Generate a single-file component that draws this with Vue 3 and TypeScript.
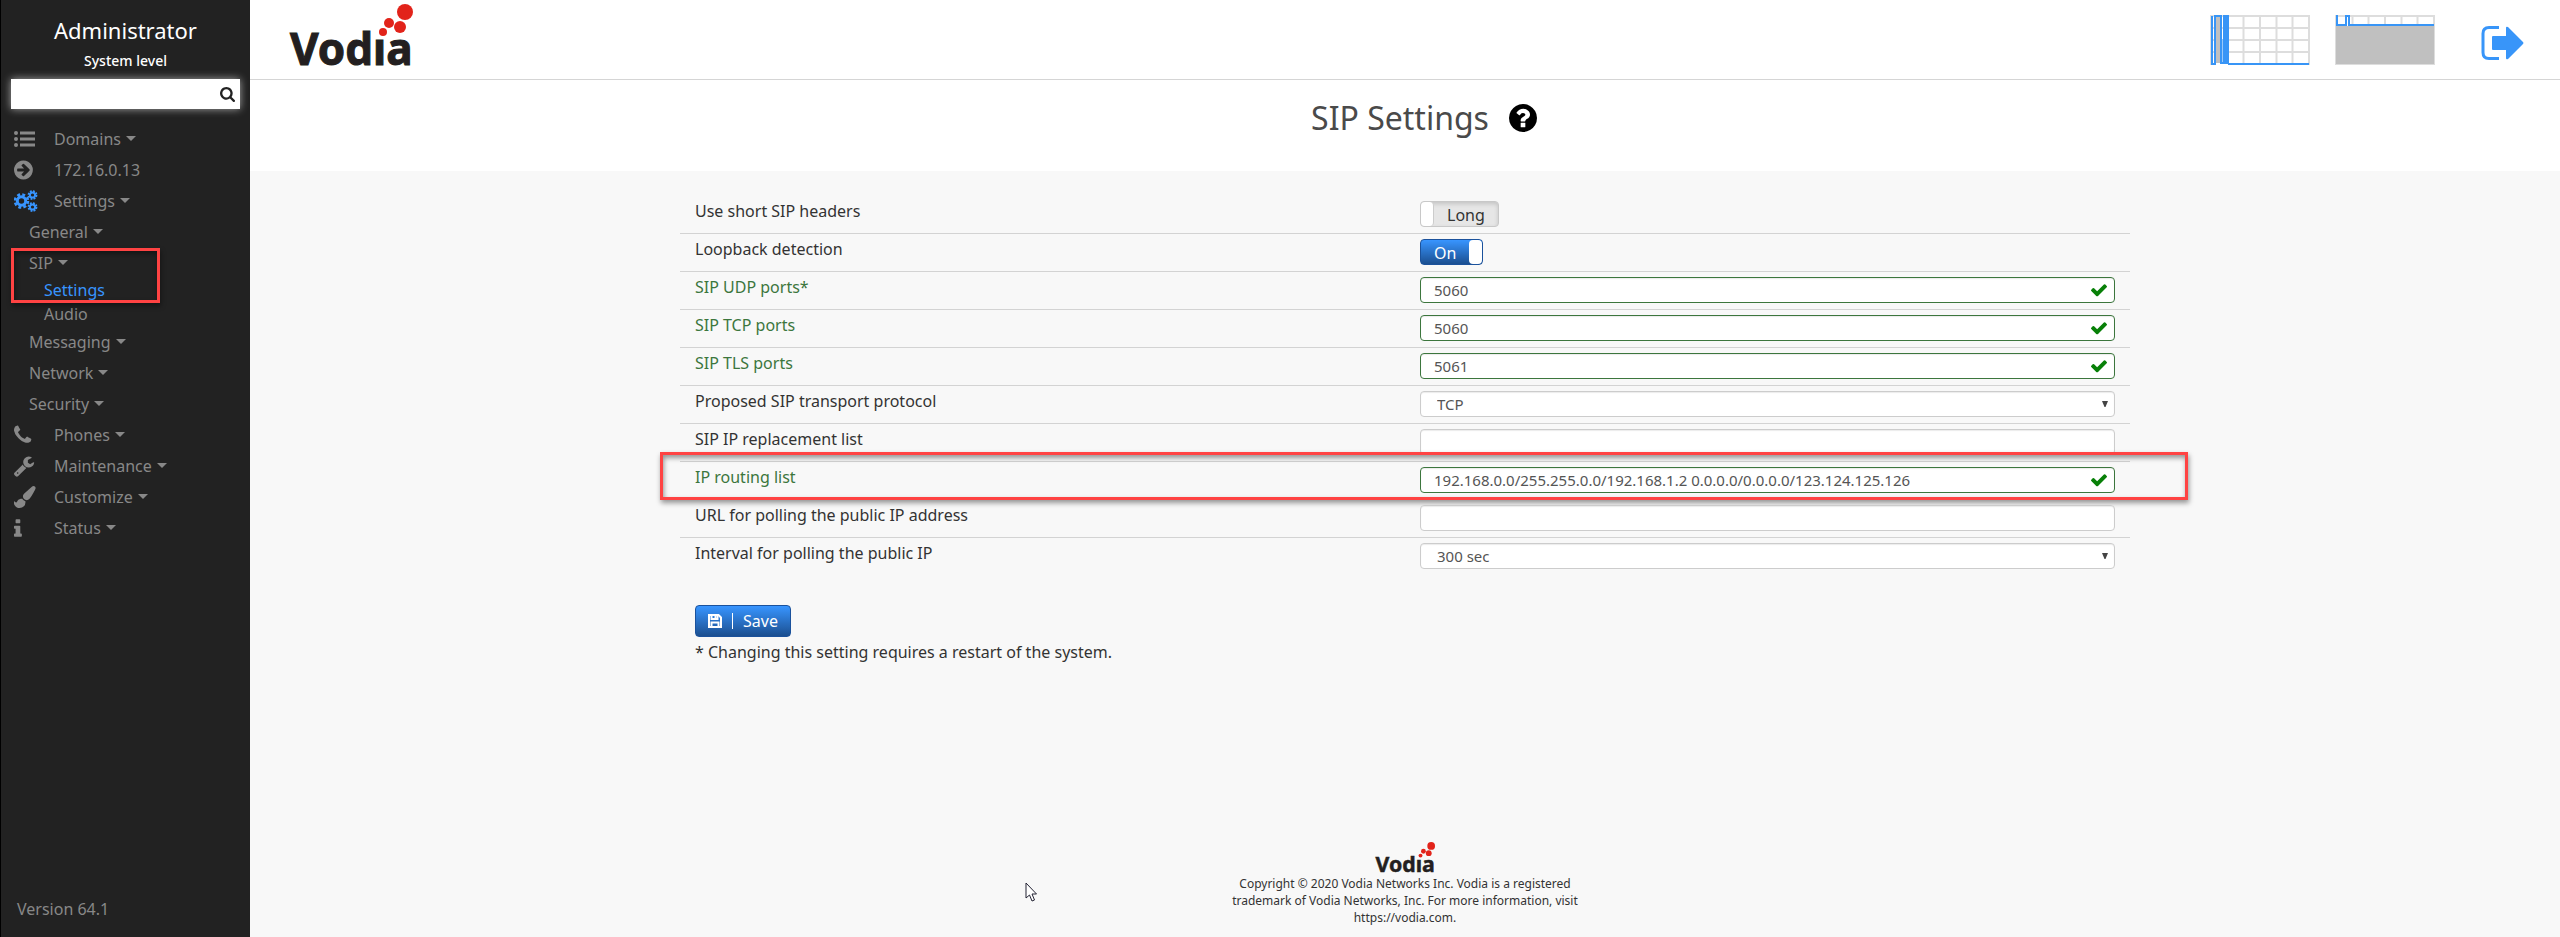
<script setup lang="ts">
import { reactive, ref } from 'vue'

interface NavItem {
  label: string
  level: 1 | 2 | 3
  icon?: string
  caret?: boolean
  active?: boolean
}

interface Field {
  id: string
  label: string
  kind: 'toggle' | 'text' | 'select'
  value: string
  on?: boolean
  valid?: boolean
  marked?: boolean
  options?: string[]
}

const iconPaths: Record<string, string> = {
  arrow:
    'M1413 896q0-27-18-45l-91-91-362-362q-18-18-45-18t-45 18l-91 91q-18 18-18 45t18 45l189 189h-502q-26 0-45 19t-19 45v128q0 26 19 45t45 19h502l-189 189q-18 18-18 45t18 45l91 91q18 18 45 18t45-18l362-362 91-91q18-18 18-45zm251 0q0 209-103 385.5t-279.5 279.5-385.5 103-385.5-103-279.5-279.5-103-385.5 103-385.5 279.5-279.5 385.5-103 385.5 103 279.5 279.5 103 385.5z',
  phone:
    'M1600 1240q0 27-10 70.5t-21 68.5q-21 50-122 106-94 51-186 51-27 0-53-3.5t-57.5-12.5-47-14.5-55.5-20.5-49-18q-98-35-175-83-127-79-264-216t-216-264q-48-77-83-175-3-9-18-49t-20.5-55.5-14.5-47-12.5-57.5-3.5-53q0-92 51-186 56-101 106-122 25-11 68.5-21t70.5-10q14 0 21 3 18 6 53 76 11 19 30 54t35 63.5 31 53.5q3 4 17.5 25t21.5 35.5 7 28.5q0 20-28.5 50t-62 55-62 53-28.5 46q0 9 5 22.5t8.5 20.5 14 24 11.5 19q76 137 174 235t235 174q2 1 19 11.5t24 14 20.5 8.5 22.5 5q18 0 46-28.5t53-62 55-62 50-28.5q14 0 28.5 7t35.5 21.5 25 17.5q25 15 53.5 31t63.5 35 54 30q70 35 76 53 3 7 3 21z',
  wrench:
    'M448 1472q0-26-19-45t-45-19-45 19-19 45 19 45 45 19 45-19 19-45zm644-420l-682 682q-37 37-90 37-52 0-91-37l-106-108q-38-36-38-90 0-53 38-91l681-681q39 98 114.5 173.5t173.5 114.5zm634-435q0 39-23 106-47 134-164.5 217.5t-258.5 83.5q-185 0-316.5-131.5t-131.5-316.5 131.5-316.5 316.5-131.5q58 0 121.5 16.5t107.5 46.5q16 11 16 28t-16 28l-293 169v224l193 107q5-3 79-48.5t135.5-81 70.5-35.5q15 0 23.5 10t8.5 25z',
  brush:
    'M1615 0q70 0 122.5 46.5t52.5 116.5q0 63-45 151-332 629-465 752-97 91-218 91-126 0-216.5-92.5t-90.5-219.5q0-128 92-212l638-579q59-54 130-54zm-909 1034q39 76 106.5 130t150.5 76l1 71q4 213-129.5 347t-348.5 134q-123 0-218-46.5t-152.5-127.5-86.5-183-29-220q7 5 41 30t62 44.5 59 36.5 46 17q41 0 55-37 25-66 57.5-112.5t69.5-76 88-47.5 103-25.5 125-10.5z',
  info:
    'M1216 1344v128q0 26-19 45t-45 19h-512q-26 0-45-19t-19-45v-128q0-26 19-45t45-19h64v-384h-64q-26 0-45-19t-19-45v-128q0-26 19-45t45-19h384q26 0 45 19t19 45v576h64q26 0 45 19t19 45zm-128-1152v192q0 26-19 45t-45 19h-256q-26 0-45-19t-19-45v-192q0-26 19-45t45-19h256q26 0 45 19t19 45z',
}

/* left edge of each drawing inside its 1792-unit box */
const iconBoxes: Record<string, string> = {
  arrow: '128 0 1792 1792',
  phone: '192 0 1792 1792',
  wrench: '85 0 1792 1792',
  brush: '30 0 1792 1792',
  info: '576 -64 1792 1792',
}

const navTop: NavItem[] = [
  { label: 'Domains', level: 1, icon: 'list', caret: true },
  { label: '172.16.0.13', level: 1, icon: 'arrow' },
  { label: 'Settings', level: 1, icon: 'cogs', caret: true },
  { label: 'General', level: 2, caret: true },
]
const navMarked: NavItem[] = [
  { label: 'SIP', level: 2, caret: true },
  { label: 'Settings', level: 3, active: true },
]
const navRest: NavItem[] = [
  { label: 'Audio', level: 3 },
  { label: 'Messaging', level: 2, caret: true },
  { label: 'Network', level: 2, caret: true },
  { label: 'Security', level: 2, caret: true },
  { label: 'Phones', level: 1, icon: 'phone', caret: true },
  { label: 'Maintenance', level: 1, icon: 'wrench', caret: true },
  { label: 'Customize', level: 1, icon: 'brush', caret: true },
  { label: 'Status', level: 1, icon: 'info', caret: true },
]
const navGroups = [
  { marked: false, items: navTop },
  { marked: true, items: navMarked },
  { marked: false, items: navRest },
]

const fields = reactive<Field[]>([
  { id: 'short', label: 'Use short SIP headers', kind: 'toggle', value: 'Long', on: false },
  { id: 'loop', label: 'Loopback detection', kind: 'toggle', value: 'On', on: true },
  { id: 'udp', label: 'SIP UDP ports*', kind: 'text', value: '5060', valid: true },
  { id: 'tcp', label: 'SIP TCP ports', kind: 'text', value: '5060', valid: true },
  { id: 'tls', label: 'SIP TLS ports', kind: 'text', value: '5061', valid: true },
  { id: 'transport', label: 'Proposed SIP transport protocol', kind: 'select', value: 'TCP', options: ['UDP', 'TCP', 'TLS'] },
  { id: 'replace', label: 'SIP IP replacement list', kind: 'text', value: '' },
  {
    id: 'routing',
    label: 'IP routing list',
    kind: 'text',
    value: '192.168.0.0/255.255.0.0/192.168.1.2 0.0.0.0/0.0.0.0/123.124.125.126',
    valid: true,
    marked: true,
  },
  { id: 'poll', label: 'URL for polling the public IP address', kind: 'text', value: '' },
  { id: 'interval', label: 'Interval for polling the public IP', kind: 'select', value: '300 sec', options: ['60 sec', '300 sec', '600 sec'] },
])

const query = ref('')
const toggleText = (f: Field): string =>
  f.id === 'short' ? (f.on ? 'Short' : 'Long') : f.on ? 'On' : 'Off'
</script>

<template>
  <div class="page">
    <aside class="sidebar">
      <div class="who">Administrator</div>
      <div class="scope">System level</div>
      <form class="search" role="search" @submit.prevent>
        <input v-model="query" type="text" aria-label="Search" />
        <button type="submit" aria-label="Search">
          <svg viewBox="64 128 1664 1664" width="15" height="15">
            <path
              d="M1216 832q0-185-131.5-316.5t-316.5-131.5-316.5 131.5-131.5 316.5 131.5 316.5 316.5 131.5 316.5-131.5 131.5-316.5zm512 832q0 52-38 90t-90 38q-54 0-90-38l-343-342q-179 124-399 124-143 0-273.5-55.5t-225-150-150-225-55.5-273.5 55.5-273.5 150-225 225-150 273.5-55.5 273.5 55.5 225 150 150 225 55.5 273.5q0 220-124 399l343 343q37 37 37 90z"
            />
          </svg>
        </button>
      </form>
      <nav class="nav" aria-label="Main">
        <ul v-for="(group, g) in navGroups" :key="g" :class="{ marked: group.marked }">
          <li v-for="item in group.items" :key="item.label">
            <a href="#" :class="['l' + item.level, { active: item.active }]">
              <span v-if="item.level === 1" class="ico">
                <svg v-if="item.icon === 'list'" viewBox="0 0 22 18" width="22" height="18">
                  <circle cx="2" cy="3" r="2" /><circle cx="2" cy="9" r="2" /><circle cx="2" cy="15" r="2" />
                  <path d="M6 1.5h15v3H6zM6 7.500h15v3H6zM6 13.500h15v3H6z" />
                </svg>
                <svg v-else-if="item.icon === 'cogs'" class="cogs" viewBox="0 0 24 22" width="24" height="22">
                  <circle cx="7.500" cy="11" r="4.200" stroke-width="3" />
                  <circle cx="7.500" cy="11" r="6.500" stroke-width="2.600" stroke-dasharray="2.900 2.205" />
                  <circle cx="18.500" cy="5" r="2.600" stroke-width="2" />
                  <circle cx="18.500" cy="5" r="4" stroke-width="1.800" stroke-dasharray="1.900 1.242" />
                  <circle cx="18.500" cy="17" r="2.600" stroke-width="2" />
                  <circle cx="18.500" cy="17" r="4" stroke-width="1.800" stroke-dasharray="1.900 1.242" />
                </svg>
                <svg v-else :viewBox="iconBoxes[item.icon!]" width="22" height="22">
                  <path :d="iconPaths[item.icon!]" />
                </svg>
              </span>
              <span>{{ item.label }}</span>
              <i v-if="item.caret" class="caret"></i>
            </a>
          </li>
        </ul>
      </nav>
      <div class="version">Version 64.1</div>
    </aside>

    <div class="content">
      <header class="topbar">
        <a href="#" class="brand" aria-label="Vodia">
          <svg viewBox="0 0 124 64" width="124" height="64">
            <text x="0" y="61">Vodıa</text>
            <circle cx="93" cy="28" r="4" /><circle cx="99" cy="19" r="5" />
            <circle cx="110" cy="23" r="6" /><circle cx="115" cy="8" r="8" />
          </svg>
        </a>
        <div class="tools">
          <svg class="chart" viewBox="0 0 100 50" width="100" height="50">
            <path class="grid" d="M33.500 0v50M50 0v50M66.500 0v50M82.500 0v50M99 0v50M1 0v50M0 1h100M0 13h100M0 25h100M0 37h100" />
            <path class="fill" d="M5 2h6v46H5z" />
            <path class="soft" d="M1 18l2-8v38H1zM11 24h2v24h-2z" />
            <path class="line" d="M2 1v48h3V1h6v47h3V1h3v47M15 1v47" />
            <path class="solid" d="M13 0h6v49h-6z" />
            <path class="line" d="M18 49h81" />
          </svg>
          <svg class="chart second" viewBox="0 0 100 50" width="100" height="50">
            <path class="grid" d="M17.500 0v12M33.500 0v12M50 0v12M66.500 0v12M82.500 0v12M99 0v50M1 0v50M0 1h100M0 49h100" />
            <path class="fill" d="M1 11h98v38H1z" />
            <path class="line" d="M2 0v10h9V1h3v9h85" />
          </svg>
          <button type="button" class="logout" aria-label="Log out">
            <svg viewBox="0 0 43 36" width="43" height="36">
              <path class="door" d="M18 2.500H8q-6 0-6 6v19q0 6 6 6h10" />
              <path d="M12 11h13V3q0-2 2-1l15 15q1 1 0 2L27 34q-2 1-2-1v-8H12q-1 0-1-1V12q0-1 1-1z" />
            </svg>
          </button>
        </div>
      </header>

      <div class="heading">
        <h1>SIP Settings</h1>
        <button type="button" class="help" aria-label="Help">
          <svg viewBox="128 128 1536 1536" width="28" height="28">
            <path
              d="M1024 1376v-192q0-14-9-23t-23-9h-192q-14 0-23 9t-9 23v192q0 14 9 23t23 9h192q14 0 23-9t9-23zm256-672q0-88-55.500-163t-138.500-116-170-41q-243 0-371 213-15 24 8 42l132 100q7 6 19 6 16 0 25-12 53-68 86-92 34-24 86-24 48 0 85.500 26t37.500 59q0 38-20 61t-68 45q-63 28-115.500 86.500t-52.500 125.500v36q0 14 9 23t23 9h192q14 0 23-9t9-23q0-19 21.500-49.500t54.500-49.500q32-18 49-28.500t46-35 44.500-48 28-60.500 12.500-81zm384 192q0 209-103 385.500t-279.500 279.500-385.500 103-385.500-103-279.500-279.500-103-385.500 103-385.500 279.500-279.500 385.500-103 385.500 103 279.500 279.500 103 385.500z"
            />
          </svg>
        </button>
      </div>

      <main class="main">
        <form class="settings" @submit.prevent>
          <div v-for="f in fields" :key="f.id" class="row" :class="{ valid: f.valid, outlined: f.marked }">
            <label :for="f.id" class="label">{{ f.label }}</label>
            <div class="control">
              <span v-if="f.kind === 'toggle'" class="toggle" :class="{ on: f.on }">
                <input :id="f.id" v-model="f.on" type="checkbox" />
                <span class="state">{{ toggleText(f) }}</span>
                <span class="knob"></span>
              </span>
              <span v-else-if="f.kind === 'text'" class="box">
                <input :id="f.id" v-model="f.value" type="text" />
                <svg v-if="f.valid" class="check" viewBox="121 268 1550 1254" width="16" height="13">
                  <path
                    d="M1671 566q0 40-28 68l-724 724-136 136q-28 28-68 28t-68-28l-136-136-362-362q-28-28-28-68t28-68l136-136q28-28 68-28t68 28l294 295 656-657q28-28 68-28t68 28l136 136q28 28 28 68z"
                  />
                </svg>
              </span>
              <span v-else class="box">
                <select :id="f.id" v-model="f.value">
                  <option v-for="o in f.options" :key="o">{{ o }}</option>
                </select>
                <svg class="arrow" viewBox="0 0 6 6" width="6" height="6"><path d="M0 0h6L3.500 6h-1z" /></svg>
              </span>
            </div>
          </div>
          <div class="actions">
            <button type="submit" class="save">
              <svg viewBox="0 0 14 14" width="14" height="14">
                <path class="edge" d="M1 1h9.500L13 3.500V13H1z" />
                <path class="edge" d="M3.500 1v4h6V1M3.500 13V8.500h7V13" />
                <path class="slot" d="M6.500 1.500h2v3h-2z" />
              </svg>
              <span class="bar"></span>
              <span>Save</span>
            </button>
            <p>* Changing this setting requires a restart of the system.</p>
          </div>
        </form>
      </main>

      <footer class="footer">
        <svg class="mark" viewBox="0 0 124 64" width="61" height="31" role="img" aria-label="Vodia">
          <text x="0" y="61">Vodıa</text>
          <circle cx="93" cy="28" r="4" /><circle cx="99" cy="19" r="5" />
          <circle cx="110" cy="23" r="6" /><circle cx="115" cy="8" r="8" />
        </svg>
        <p>
          Copyright © 2020 Vodia Networks Inc. Vodia is a registered<br />
          trademark of Vodia Networks, Inc. For more information, visit<br />
          https://vodia.com.
        </p>
      </footer>
    </div>

    <svg class="pointer" viewBox="0 0 14 20" width="14" height="20" aria-hidden="true">
      <path d="M1 1v15l3.500-3 2.500 6 2.500-1-2.500-6h4.500z" />
    </svg>
  </div>
</template>

<style>
body {
  margin: 0;
}
</style>

<style scoped>
.page {
  position: relative;
  display: flex;
  min-height: 100vh;
  background: #f8f8f8;
  color: #333;
  font: 16px/20px 'Noto Sans', 'Open Sans', sans-serif;
}
input,
select,
button {
  box-sizing: border-box;
  margin: 0;
  font-family: inherit;
}
button {
  cursor: pointer;
}

/* sidebar */
.sidebar {
  box-sizing: border-box;
  display: flex;
  flex: none;
  flex-direction: column;
  width: 250px;
  padding: 15px 10px 18px;
  border-left: 1px solid #000;
  background: #222;
  color: #888;
}
.who {
  color: #fff;
  font-size: 22px;
  line-height: 30px;
  text-align: center;
}
.scope {
  margin: 6px 0 8px;
  color: #fff;
  font-size: 14px;
  font-weight: 500;
  text-align: center;
}
.search {
  display: flex;
  height: 30px;
  background: #fff;
  box-shadow: 0 0 8px rgba(255, 255, 255, 0.6);
}
.search input {
  flex: 1;
  min-width: 0;
  padding: 0 8px;
  border: 0;
  background: none;
  outline: 0;
}
.search button {
  display: flex;
  align-items: center;
  padding: 0 5px;
  border: 0;
  background: none;
  fill: #222;
}
.nav {
  margin-top: 14px;
}
.nav ul {
  margin: 0;
  padding: 0;
  list-style: none;
}
.nav a {
  display: flex;
  align-items: center;
  height: 31px;
  padding-left: 3px;
  color: #888;
  text-decoration: none;
}
.nav a.l2 {
  padding-left: 18px;
}
.nav a.l3 {
  height: 24px;
  padding-left: 33px;
}
.nav a.active {
  color: #3895ff;
}
.ico {
  display: flex;
  align-items: center;
  width: 40px;
  fill: #888;
}
.cogs {
  fill: none;
  stroke: #3895ff;
}
.caret {
  margin-left: 5px;
  border: 5px solid transparent;
  border-top-color: #888;
  border-bottom: 0;
}
.marked {
  position: relative;
}
.marked::after,
.outlined::after {
  content: '';
  position: absolute;
  border: 3px solid #ff4343;
  box-shadow:
    1px 3px 5px rgba(0, 0, 0, 0.4),
    inset 1px 3px 5px rgba(0, 0, 0, 0.4);
  pointer-events: none;
}
.marked::after {
  inset: 1px 80px -1px 0;
}
.version {
  margin-top: auto;
  padding-left: 6px;
}

/* top bar */
.content {
  display: flex;
  flex: 1;
  flex-direction: column;
  min-width: 0;
}
.topbar {
  box-sizing: border-box;
  display: flex;
  align-items: center;
  justify-content: space-between;
  height: 80px;
  padding: 0 36px 0 40px;
  border-bottom: 1px solid #d5d5d5;
  background: #fff;
}
.brand {
  display: flex;
  height: 72px;
}
.brand svg,
.mark {
  overflow: visible;
  fill: #e2231a;
}
.brand text,
.mark text {
  fill: #231f20;
  stroke: #231f20;
  stroke-width: 1px;
  font: 700 44px 'Noto Sans', 'Open Sans', sans-serif;
}
.tools {
  display: flex;
  align-items: center;
}
.second {
  margin: 0 46px 0 25px;
}
.chart path {
  fill: none;
}
.chart .grid {
  stroke: #ddd;
  stroke-width: 2;
}
.chart .fill {
  fill: #c0c0c0;
}
.chart .soft {
  fill: #9cc9f8;
}
.chart .line {
  stroke: #3895f6;
  stroke-width: 2;
}
.chart .solid {
  fill: #3895f6;
}
.logout {
  display: flex;
  margin-top: 6px;
  padding: 0;
  border: 0;
  background: none;
  fill: #3895f9;
}
.door {
  fill: none;
  stroke: #3895f9;
  stroke-width: 3;
}
.heading {
  display: flex;
  align-items: center;
  justify-content: center;
  gap: 20px;
  box-sizing: border-box;
  height: 91px;
  padding: 0 0 15px 38px;
  background: #fff;
}
h1 {
  margin: 0;
  color: #4a4a4a;
  font-size: 32px;
  font-weight: 400;
  line-height: 40px;
}
.help {
  display: flex;
  padding: 0;
  border: 0;
  background: none;
}

/* form */
.main {
  padding: 25px 20px 0;
}
.settings {
  max-width: 1450px;
  margin: 0 auto;
}
.row {
  position: relative;
  display: grid;
  grid-template-columns: 1fr 1fr;
  padding: 5px 0 6px;
  border-bottom: 1px solid #d3d3d3;
}
.row:nth-child(10) {
  border-bottom: 0;
}
.outlined::after {
  inset: -10px -58px -1px -20px;
}
.label {
  padding: 0 15px;
}
.valid .label {
  color: #3c763d;
}
.control {
  height: 26px;
  padding: 0 15px;
}
.box {
  position: relative;
  display: flex;
}
.box input,
.box select {
  width: 100%;
  height: 26px;
  padding: 0 30px 1px 13px;
  border: 1px solid #ccc;
  border-radius: 4px;
  background: #fff;
  box-shadow: inset 0 1px 1px rgba(0, 0, 0, 0.08);
  color: #555;
  font-size: 15px;
  appearance: none;
}
.box select {
  padding-left: 16px;
}
.valid .box input {
  border-color: #3c763d;
}
.check,
.arrow {
  position: absolute;
  top: 50%;
  right: 8px;
  fill: #088008;
  transform: translateY(-50%);
  pointer-events: none;
}
.arrow {
  right: 7px;
  fill: #444;
}
.toggle {
  position: relative;
  box-sizing: border-box;
  display: inline-flex;
  align-items: center;
  height: 26px;
  border: 1px solid #c8c8c8;
  border-radius: 4px;
  background: #e6e6e6;
  box-shadow: inset 0 2px 4px rgba(0, 0, 0, 0.15);
  flex-direction: row-reverse;
}
.toggle.on {
  flex-direction: row;
  border-color: #1b529c;
  background: linear-gradient(#3895ff, #1b4f90);
  box-shadow: none;
  color: #fff;
}
.toggle input {
  position: absolute;
  inset: 0;
  width: 100%;
  height: 100%;
  opacity: 0;
}
.state {
  padding: 2px 13px 0;
}
.knob {
  width: 12px;
  height: 24px;
  border-right: 1px solid #ccc;
  border-radius: 4px;
  background: #fff;
}
.on .knob {
  width: 13px;
  border: 0;
}
.actions {
  padding: 30px 15px 0;
}
.actions p {
  margin: 5px 0 0;
}
.save {
  display: flex;
  align-items: center;
  gap: 10px;
  height: 32px;
  padding: 0 12px;
  border: 1px solid #1b529c;
  border-radius: 4px;
  background: linear-gradient(#3895ff, #1b4f90);
  color: #fff;
  font-size: 16px;
}
.edge {
  fill: none;
  stroke: #fff;
  stroke-width: 2;
}
.slot {
  fill: #fff;
}
.bar {
  width: 1px;
  height: 16px;
  background: #fff;
}

/* footer */
.footer {
  margin-top: auto;
  padding: 20px 20px 11px;
  font-size: 12px;
  line-height: 17px;
  text-align: center;
}
.footer p {
  margin: 0;
}
.mark {
  display: block;
  margin: 0 auto 2px;
}
.pointer {
  position: absolute;
  top: 882px;
  left: 1025px;
  fill: #fff;
  stroke: #223;
}
</style>
